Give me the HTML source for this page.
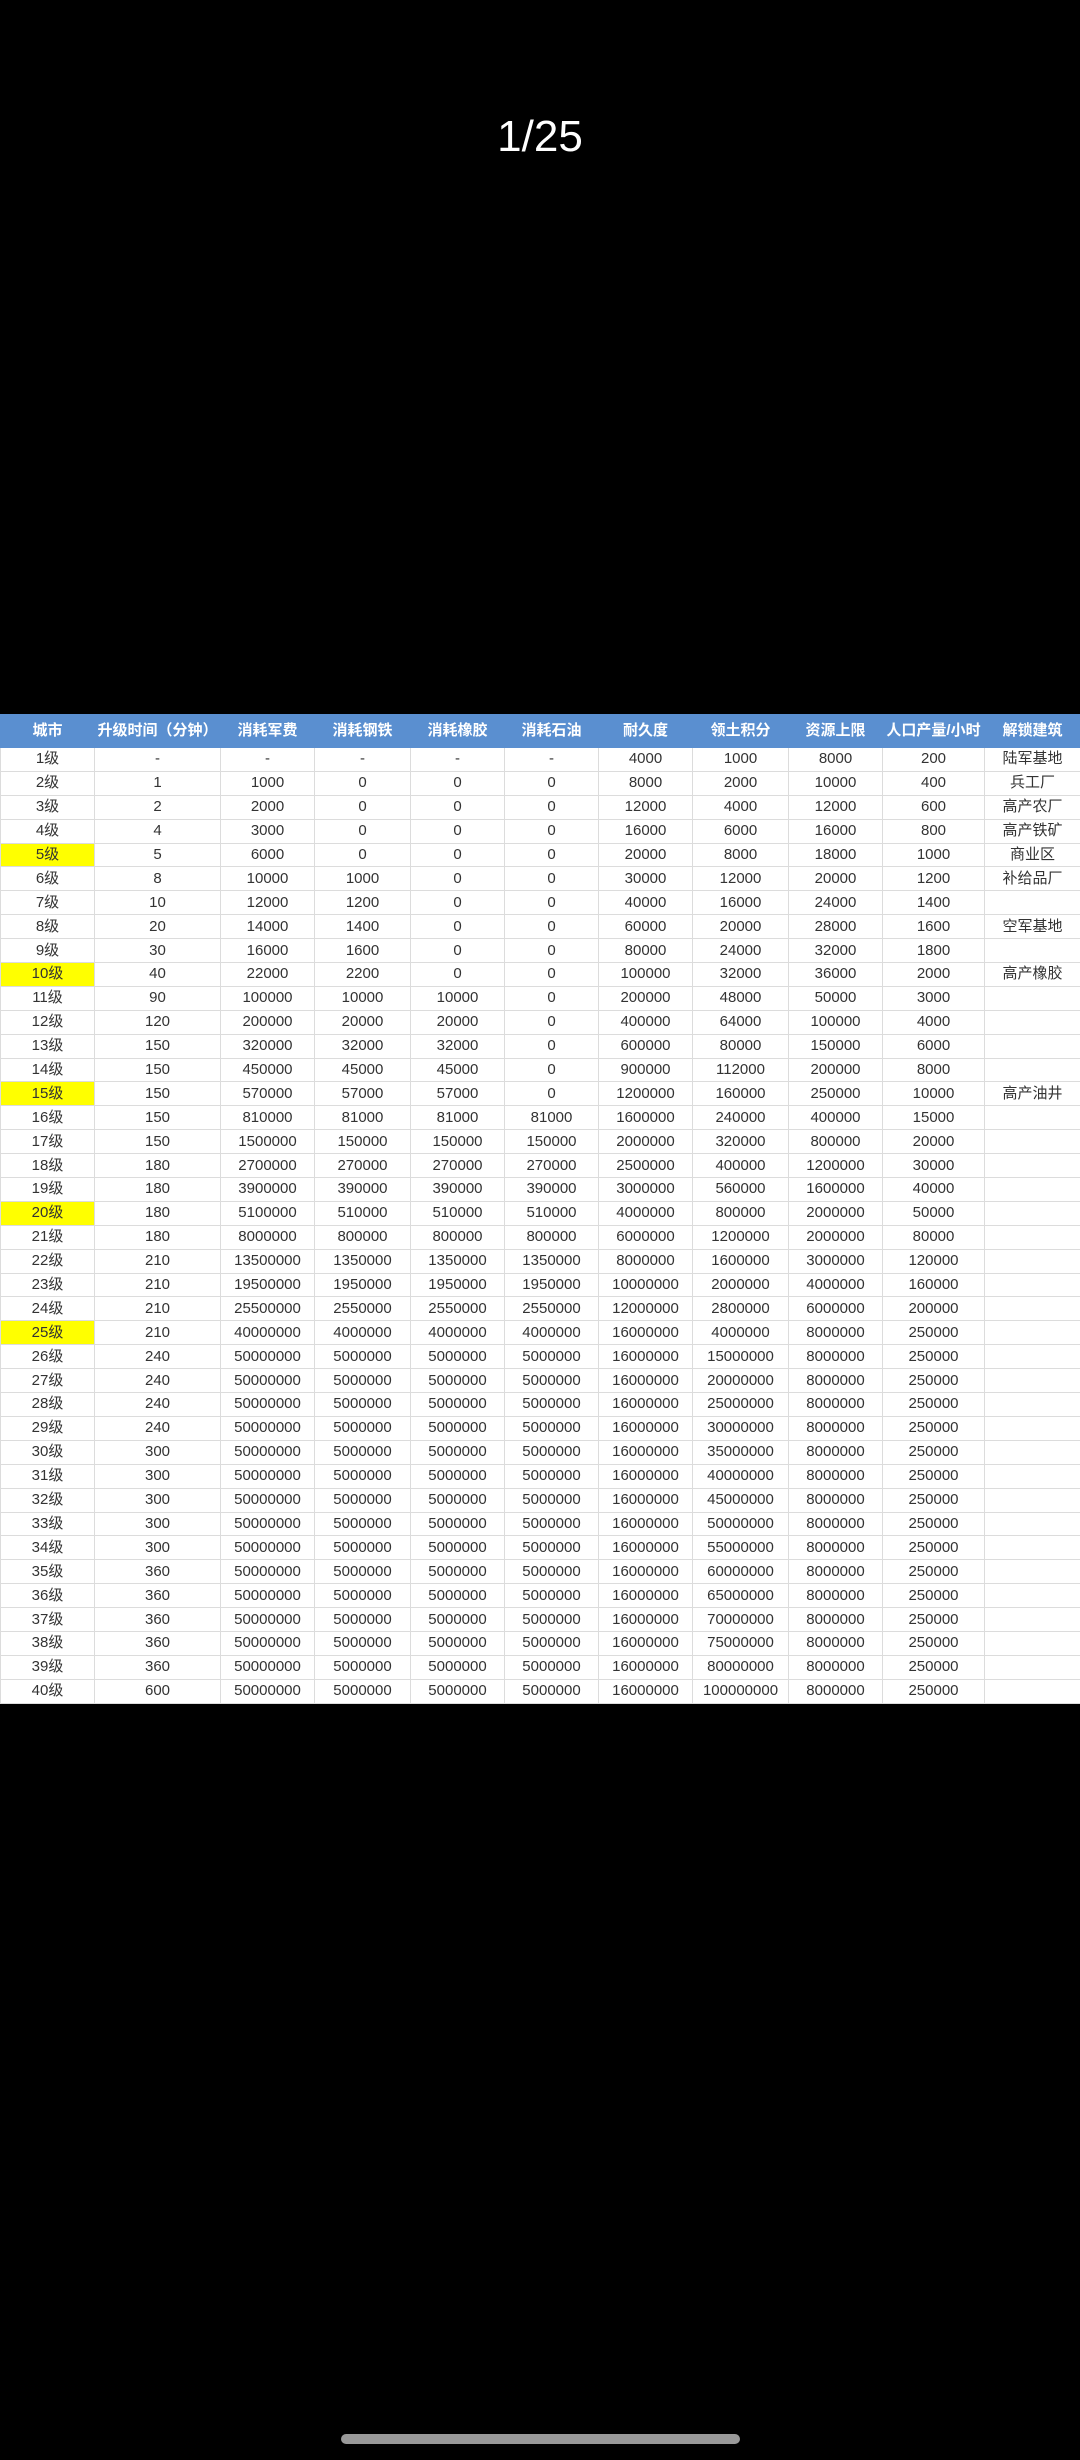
<!DOCTYPE html>
<html><head><meta charset="utf-8"><style>
body{margin:0;width:1080px;height:2460px;background:#000;position:relative;overflow:hidden;font-family:"Liberation Sans","Noto Sans CJK SC",sans-serif}
.t{position:absolute;top:112px;left:0;width:1080px;text-align:center;color:#fff;font-size:44px}
table{position:absolute;left:0;top:714px;width:1080px;border-collapse:collapse;table-layout:fixed;background:#fff}
td,th{border:1px solid #dcdcdc;text-align:center;padding:0;font-size:15px;color:#333;height:22.9px;line-height:22px;white-space:nowrap;overflow:hidden;font-weight:normal}
th{background:#5a8fd0;color:#fff;font-weight:bold;height:32px;font-size:15px;border-color:#5a8fd0}
.y{background:#ffff00}
.bar{position:absolute;left:341px;top:2434px;width:399px;height:10px;border-radius:5px;background:#999}
</style></head><body>
<div class="t">1/25</div>
<table>
<colgroup><col style="width:94px"><col style="width:126px"><col style="width:94px"><col style="width:96px"><col style="width:94px"><col style="width:94px"><col style="width:94px"><col style="width:96px"><col style="width:94px"><col style="width:102px"><col style="width:96px"></colgroup>
<tr><th>城市</th><th>升级时间（分钟）</th><th>消耗军费</th><th>消耗钢铁</th><th>消耗橡胶</th><th>消耗石油</th><th>耐久度</th><th>领土积分</th><th>资源上限</th><th>人口产量/小时</th><th>解锁建筑</th></tr>
<tr><td>1级</td><td>-</td><td>-</td><td>-</td><td>-</td><td>-</td><td>4000</td><td>1000</td><td>8000</td><td>200</td><td>陆军基地</td></tr>
<tr><td>2级</td><td>1</td><td>1000</td><td>0</td><td>0</td><td>0</td><td>8000</td><td>2000</td><td>10000</td><td>400</td><td>兵工厂</td></tr>
<tr><td>3级</td><td>2</td><td>2000</td><td>0</td><td>0</td><td>0</td><td>12000</td><td>4000</td><td>12000</td><td>600</td><td>高产农厂</td></tr>
<tr><td>4级</td><td>4</td><td>3000</td><td>0</td><td>0</td><td>0</td><td>16000</td><td>6000</td><td>16000</td><td>800</td><td>高产铁矿</td></tr>
<tr><td class="y">5级</td><td>5</td><td>6000</td><td>0</td><td>0</td><td>0</td><td>20000</td><td>8000</td><td>18000</td><td>1000</td><td>商业区</td></tr>
<tr><td>6级</td><td>8</td><td>10000</td><td>1000</td><td>0</td><td>0</td><td>30000</td><td>12000</td><td>20000</td><td>1200</td><td>补给品厂</td></tr>
<tr><td>7级</td><td>10</td><td>12000</td><td>1200</td><td>0</td><td>0</td><td>40000</td><td>16000</td><td>24000</td><td>1400</td><td></td></tr>
<tr><td>8级</td><td>20</td><td>14000</td><td>1400</td><td>0</td><td>0</td><td>60000</td><td>20000</td><td>28000</td><td>1600</td><td>空军基地</td></tr>
<tr><td>9级</td><td>30</td><td>16000</td><td>1600</td><td>0</td><td>0</td><td>80000</td><td>24000</td><td>32000</td><td>1800</td><td></td></tr>
<tr><td class="y">10级</td><td>40</td><td>22000</td><td>2200</td><td>0</td><td>0</td><td>100000</td><td>32000</td><td>36000</td><td>2000</td><td>高产橡胶</td></tr>
<tr><td>11级</td><td>90</td><td>100000</td><td>10000</td><td>10000</td><td>0</td><td>200000</td><td>48000</td><td>50000</td><td>3000</td><td></td></tr>
<tr><td>12级</td><td>120</td><td>200000</td><td>20000</td><td>20000</td><td>0</td><td>400000</td><td>64000</td><td>100000</td><td>4000</td><td></td></tr>
<tr><td>13级</td><td>150</td><td>320000</td><td>32000</td><td>32000</td><td>0</td><td>600000</td><td>80000</td><td>150000</td><td>6000</td><td></td></tr>
<tr><td>14级</td><td>150</td><td>450000</td><td>45000</td><td>45000</td><td>0</td><td>900000</td><td>112000</td><td>200000</td><td>8000</td><td></td></tr>
<tr><td class="y">15级</td><td>150</td><td>570000</td><td>57000</td><td>57000</td><td>0</td><td>1200000</td><td>160000</td><td>250000</td><td>10000</td><td>高产油井</td></tr>
<tr><td>16级</td><td>150</td><td>810000</td><td>81000</td><td>81000</td><td>81000</td><td>1600000</td><td>240000</td><td>400000</td><td>15000</td><td></td></tr>
<tr><td>17级</td><td>150</td><td>1500000</td><td>150000</td><td>150000</td><td>150000</td><td>2000000</td><td>320000</td><td>800000</td><td>20000</td><td></td></tr>
<tr><td>18级</td><td>180</td><td>2700000</td><td>270000</td><td>270000</td><td>270000</td><td>2500000</td><td>400000</td><td>1200000</td><td>30000</td><td></td></tr>
<tr><td>19级</td><td>180</td><td>3900000</td><td>390000</td><td>390000</td><td>390000</td><td>3000000</td><td>560000</td><td>1600000</td><td>40000</td><td></td></tr>
<tr><td class="y">20级</td><td>180</td><td>5100000</td><td>510000</td><td>510000</td><td>510000</td><td>4000000</td><td>800000</td><td>2000000</td><td>50000</td><td></td></tr>
<tr><td>21级</td><td>180</td><td>8000000</td><td>800000</td><td>800000</td><td>800000</td><td>6000000</td><td>1200000</td><td>2000000</td><td>80000</td><td></td></tr>
<tr><td>22级</td><td>210</td><td>13500000</td><td>1350000</td><td>1350000</td><td>1350000</td><td>8000000</td><td>1600000</td><td>3000000</td><td>120000</td><td></td></tr>
<tr><td>23级</td><td>210</td><td>19500000</td><td>1950000</td><td>1950000</td><td>1950000</td><td>10000000</td><td>2000000</td><td>4000000</td><td>160000</td><td></td></tr>
<tr><td>24级</td><td>210</td><td>25500000</td><td>2550000</td><td>2550000</td><td>2550000</td><td>12000000</td><td>2800000</td><td>6000000</td><td>200000</td><td></td></tr>
<tr><td class="y">25级</td><td>210</td><td>40000000</td><td>4000000</td><td>4000000</td><td>4000000</td><td>16000000</td><td>4000000</td><td>8000000</td><td>250000</td><td></td></tr>
<tr><td>26级</td><td>240</td><td>50000000</td><td>5000000</td><td>5000000</td><td>5000000</td><td>16000000</td><td>15000000</td><td>8000000</td><td>250000</td><td></td></tr>
<tr><td>27级</td><td>240</td><td>50000000</td><td>5000000</td><td>5000000</td><td>5000000</td><td>16000000</td><td>20000000</td><td>8000000</td><td>250000</td><td></td></tr>
<tr><td>28级</td><td>240</td><td>50000000</td><td>5000000</td><td>5000000</td><td>5000000</td><td>16000000</td><td>25000000</td><td>8000000</td><td>250000</td><td></td></tr>
<tr><td>29级</td><td>240</td><td>50000000</td><td>5000000</td><td>5000000</td><td>5000000</td><td>16000000</td><td>30000000</td><td>8000000</td><td>250000</td><td></td></tr>
<tr><td>30级</td><td>300</td><td>50000000</td><td>5000000</td><td>5000000</td><td>5000000</td><td>16000000</td><td>35000000</td><td>8000000</td><td>250000</td><td></td></tr>
<tr><td>31级</td><td>300</td><td>50000000</td><td>5000000</td><td>5000000</td><td>5000000</td><td>16000000</td><td>40000000</td><td>8000000</td><td>250000</td><td></td></tr>
<tr><td>32级</td><td>300</td><td>50000000</td><td>5000000</td><td>5000000</td><td>5000000</td><td>16000000</td><td>45000000</td><td>8000000</td><td>250000</td><td></td></tr>
<tr><td>33级</td><td>300</td><td>50000000</td><td>5000000</td><td>5000000</td><td>5000000</td><td>16000000</td><td>50000000</td><td>8000000</td><td>250000</td><td></td></tr>
<tr><td>34级</td><td>300</td><td>50000000</td><td>5000000</td><td>5000000</td><td>5000000</td><td>16000000</td><td>55000000</td><td>8000000</td><td>250000</td><td></td></tr>
<tr><td>35级</td><td>360</td><td>50000000</td><td>5000000</td><td>5000000</td><td>5000000</td><td>16000000</td><td>60000000</td><td>8000000</td><td>250000</td><td></td></tr>
<tr><td>36级</td><td>360</td><td>50000000</td><td>5000000</td><td>5000000</td><td>5000000</td><td>16000000</td><td>65000000</td><td>8000000</td><td>250000</td><td></td></tr>
<tr><td>37级</td><td>360</td><td>50000000</td><td>5000000</td><td>5000000</td><td>5000000</td><td>16000000</td><td>70000000</td><td>8000000</td><td>250000</td><td></td></tr>
<tr><td>38级</td><td>360</td><td>50000000</td><td>5000000</td><td>5000000</td><td>5000000</td><td>16000000</td><td>75000000</td><td>8000000</td><td>250000</td><td></td></tr>
<tr><td>39级</td><td>360</td><td>50000000</td><td>5000000</td><td>5000000</td><td>5000000</td><td>16000000</td><td>80000000</td><td>8000000</td><td>250000</td><td></td></tr>
<tr><td>40级</td><td>600</td><td>50000000</td><td>5000000</td><td>5000000</td><td>5000000</td><td>16000000</td><td>100000000</td><td>8000000</td><td>250000</td><td></td></tr>
</table>
<div class="bar"></div>
</body></html>
